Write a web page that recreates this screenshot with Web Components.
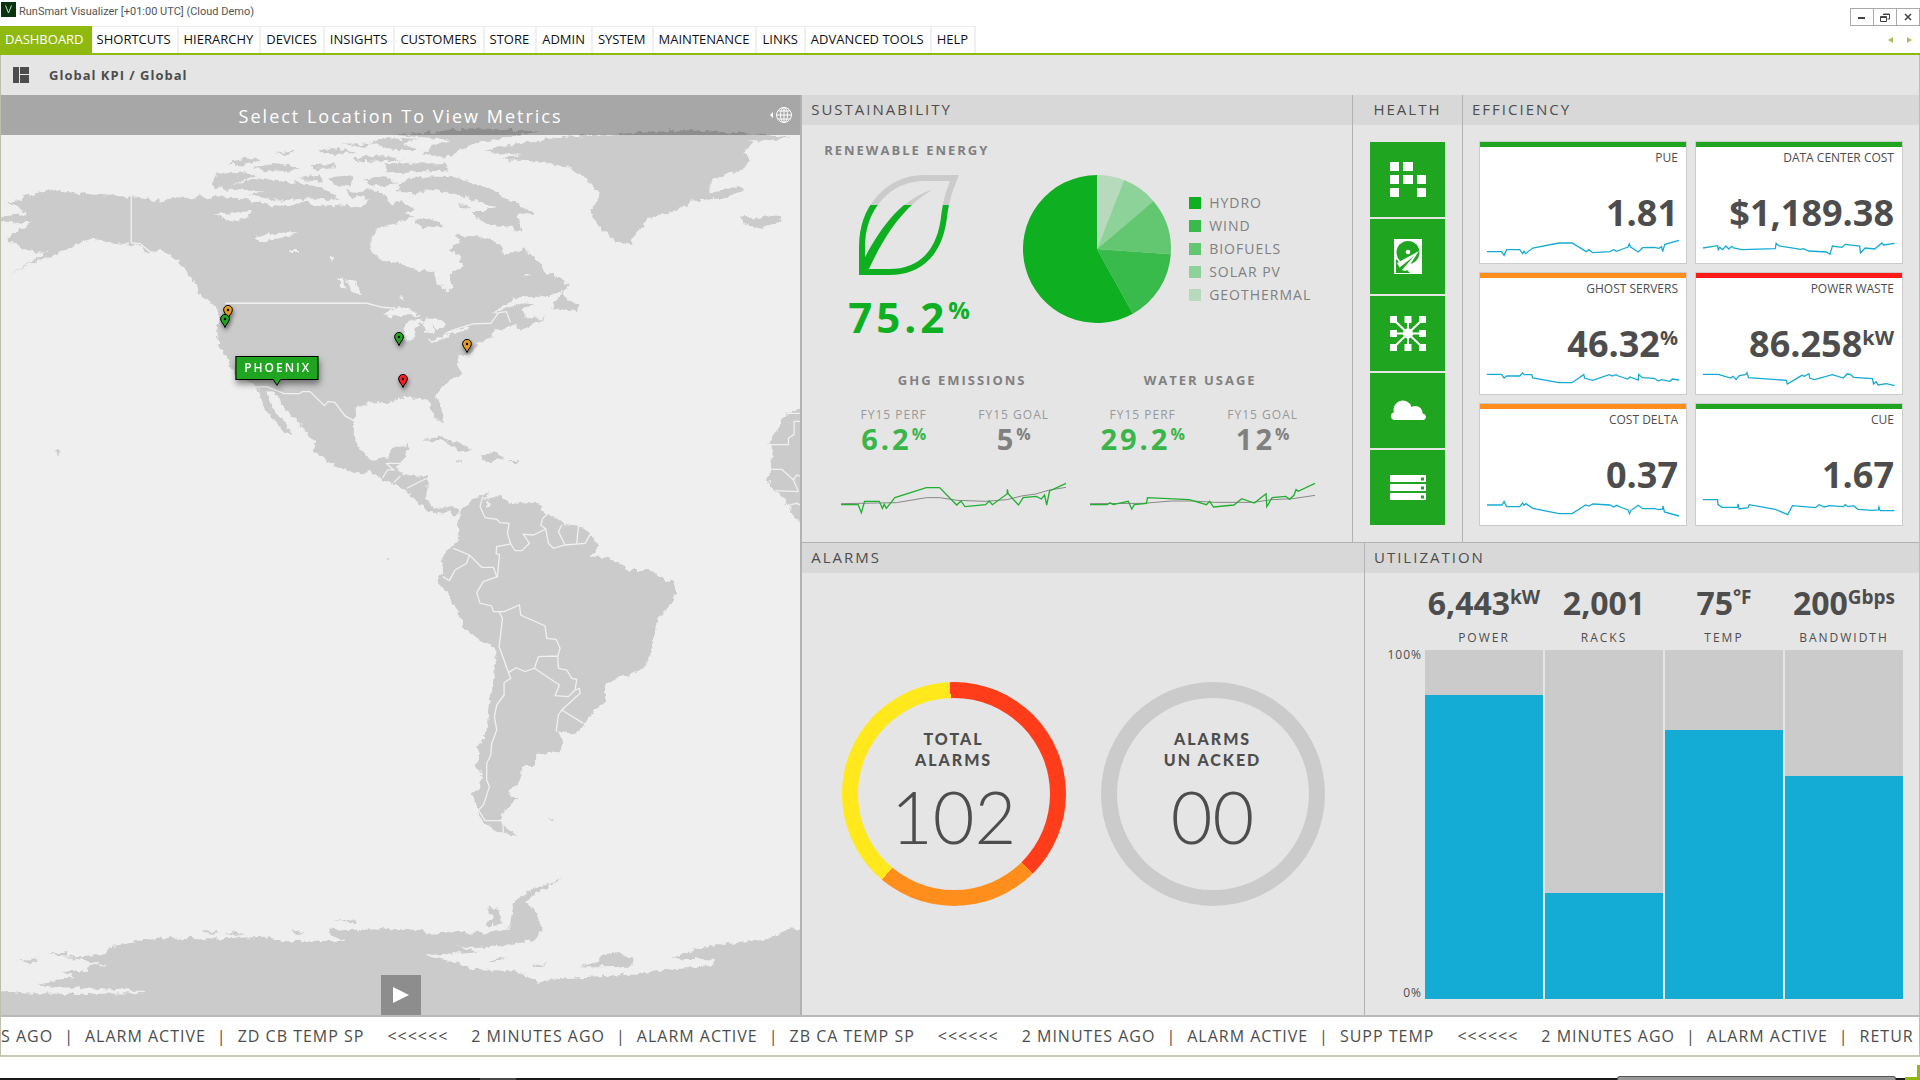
<!DOCTYPE html>
<html lang="en">
<head>
<meta charset="utf-8">
<title>RunSmart Visualizer</title>
<style>
html,body{margin:0;height:100%}
body{font-family:"Open Sans","Noto Sans",sans-serif;color:#4d4d4d;background:#fff;overflow:hidden}
</style>
</head>
<body>
<dash-app></dash-app>
<script>
const base = `<style>
:host{display:block;box-sizing:border-box}
*{box-sizing:border-box}
button{font:inherit;color:inherit;border:0;padding:0;margin:0;background:none;cursor:pointer}
a{color:inherit;text-decoration:none}
h1,h2,h3,p,ul,dl,dd,dt{margin:0;padding:0;font-weight:inherit}
ul{list-style:none}
svg{display:block}
</style>`;

// Registers an element whose shadow root is filled by render(host).
function define(name, render) {
  customElements.define(name, class extends HTMLElement {
    connectedCallback() {
      if (this.shadowRoot) return;
      const t = document.createElement('template');
      t.innerHTML = base + render(this);
      this.attachShadow({ mode: 'open' }).append(t.content.cloneNode(true));
    }
  });
}
const attr = (el, n, d = '') => el.getAttribute(n) ?? d;

define('title-bar', () => `<style>
:host{display:flex;height:26px;background:#fff}
.mark{width:15px;height:15px;margin:2px 3px 0 1px}
h1{font-size:11px;line-height:24px;color:#555;font-family:Roboto,sans-serif}
.controls{display:flex;margin:8px 0 0 auto;height:18px}
button{width:24px;height:18px;border:1px solid #aaa;margin-left:-1px;display:grid;place-items:center}
</style>
<svg class="mark" viewBox="0 0 15 15"><rect width="15" height="15" fill="#08330f"/><path d="M4.5 3.5 7.5 11l3-7.500" fill="none" stroke="#c9dccb" stroke-width="1"/></svg>
<h1>RunSmart Visualizer [+01:00 UTC] (Cloud Demo)</h1>
<div class="controls">
<button aria-label="Minimize"><svg width="8" height="8"><rect y="4" width="7" height="2" fill="#444"/></svg></button>
<button aria-label="Restore"><svg width="10" height="9" fill="none" stroke="#444"><path d="M3.500 2V1h6v5h-2M3 1.500h7" /><path d="M.5 3.500h6v5h-6zM0 4.500h7"/></svg></button>
<button aria-label="Close"><svg width="8" height="8"><path d="M1 1l6 6M7 1 1 7" stroke="#444" stroke-width="1.500"/></svg></button>
</div>`);

define('menu-bar', () => `<style>
:host{display:flex;height:29px;border-bottom:2px solid #8fb90e;background:#fff}
nav{display:flex;flex:none}
a{font-size:13px;line-height:24px;padding:0 6px 0 5px;border-top:1px solid #ececec;border-right:2px solid #f0f0f0;color:#111;white-space:nowrap}
a.on{background:#8fb90e;border-color:#8fb90e;color:#fff}
.step{display:flex;gap:14px;margin:11px 8px 0 auto}
.step svg{width:5px;height:6px}
</style>
<nav><a class="on" href="#">DASHBOARD</a>${['SHORTCUTS','HIERARCHY','DEVICES','INSIGHTS','CUSTOMERS','STORE','ADMIN','SYSTEM','MAINTENANCE','LINKS','ADVANCED TOOLS','HELP'].map(t => `<a href="#">${t}</a>`).join('')}</nav>
<div class="step"><svg viewBox="0 0 5 6"><path d="M5 0v6L0 3z" fill="#a9c261"/></svg><svg viewBox="0 0 5 6"><path d="M0 0v6l5-3z" fill="#a9c261"/></svg></div>`);

define('crumb-bar', () => `<style>
:host{display:flex;align-items:center;height:40px;background:#e5e5e5;padding-left:12px;gap:20px}
h2{font-size:13px;line-height:20px;font-weight:700;letter-spacing:1px}
</style>
<svg width="16" height="16" fill="#4d4d4d"><path d="M0 0h6v16H0zM7 0h9v7H7zM7 8h9v8H7z"/></svg>
<h2>Global KPI / Global</h2>`);

define('map-pin', el => `<style>
:host{position:absolute;transform:translate(-50%,-100%)}
button{display:block}
svg{overflow:visible;filter:drop-shadow(1px 3px 2px rgba(0,0,0,.45))}
</style>
<button aria-label="Site"><svg width="10" height="14"><path d="M5 13.500C4 10 .6 8 .6 4.800a4.400 4.400 0 0 1 8.800 0C9.400 8 6 10 5 13.500z" fill="${attr(el,'color')}" stroke="#000"/><circle cx="5" cy="5" r="1.200"/></svg></button>`);

define('map-flag', () => `<style>
:host{position:absolute;transform:translate(-50%,-100%);filter:drop-shadow(1px 4px 3px rgba(0,0,0,.45))}
button{display:block;background:#1fa51f;border:1px solid #000;color:#fff;font-size:12px;line-height:22px;font-weight:600;letter-spacing:2px;padding:0 6px 0 8px}
svg{margin:-1px auto 0}
</style>
<button><slot></slot></button><svg width="9" height="7"><path d="M0 0h9L4.500 7z" fill="#000"/><path d="M1 0h7L4.500 5.500z" fill="#1fa51f"/></svg>`);

define('world-map', () => {
  const pin = (x, y, c) => `<map-pin color="${c}" style="left:${((x - 1) / 7.99).toFixed(1)}%;top:${((y - 95) / 9.2).toFixed(1)}%"></map-pin>`;
  return `<style>
:host{position:relative;overflow:hidden;background:#efefef}
.map{position:absolute;inset:0;width:100%;height:100%}
header{position:relative;display:flex;align-items:center;height:40px;background:rgba(0,0,0,.3);color:#fff;padding-right:8px}
h2{flex:1;text-align:center;font-size:18px;line-height:36px;letter-spacing:2px;padding:2px 0 0 30px}
.play{position:absolute;bottom:0;left:50%;transform:translateX(-50%);width:40px;height:40px;background:rgba(0,0,0,.3);display:grid;place-items:center}
</style>
<svg class="map" viewBox="1 95 799 920" preserveAspectRatio="xMidYMid slice">
<defs><filter id="coast" x="0" y="0" width="100%" height="100%" color-interpolation-filters="sRGB"><feTurbulence type="fractalNoise" baseFrequency=".16" numOctaves="3" seed="4"/><feDisplacementMap in="SourceGraphic" scale="7" xChannelSelector="R" yChannelSelector="G"/></filter></defs>
<g fill="#cbcbcb" filter="url(#coast)">
<rect x="0" y="90" width="810" height="930" fill="#efefef"/>
<g transform="translate(0 90) scale(.5166 .3333)">
<path d="M10 337L40 330L45 318L95 300L140 308L200 316L245 320L310 332L345 322L375 325L385 312L400 325L430 318L470 325L520 345L560 348L590 335L610 348L650 345L700 352L715 330L690 318L705 295L730 300L745 320L760 345L780 330L800 365L780 370L800 380L770 400L735 410L720 440L715 480L740 512L770 520L810 540L840 548L845 580L868 605L875 590L870 555L895 530L890 500L870 480L890 455L880 435L925 440L965 460L975 490L1005 490L1013 465L1020 485L1040 515L1055 545L1085 565L1100 580L1098 600L1060 618L1000 625L975 645L950 672L990 650L1015 638L1040 640L1010 655L1015 685L1050 685L1060 680L1040 698L1005 720L1000 705L975 712L950 730L955 745L920 758L925 768L905 790L890 800L885 825L897 850L870 870L848 905L845 920L855 965L857 1000L845 990L833 945L822 928L790 925L770 925L750 942L720 935L690 955L685 995L685 1040L700 1085L720 1110L750 1105L762 1070L792 1065L785 1100L770 1130L775 1150L790 1155L826 1163L825 1225L839 1255L871 1250L887 1262L883 1280L871 1260L855 1275L829 1260L807 1235L787 1200L762 1183L739 1168L716 1145L697 1152L665 1138L633 1115L607 1080L610 1060L581 1005L555 960L540 925L530 905L515 905L525 950L545 985L567 1040L545 1020L515 960L500 905L490 880L450 850L440 810L425 770L420 720L425 680L418 655L400 628L385 610L380 585L365 555L350 520L310 480L290 490L265 465L225 460L180 445L150 460L100 500L60 520L20 555L60 515L90 490L50 480L15 450L15 440L60 400L0 395L0 380L50 372L35 350Z"/>
<path d="M935 185L985 165L1040 150L1100 140L1200 136L1300 137L1400 133L1440 150L1460 160L1440 185L1450 215L1440 235L1400 255L1375 275L1375 310L1430 290L1440 300L1400 325L1340 332L1330 350L1290 370L1260 378L1230 430L1222 465L1190 455L1165 420L1150 390L1140 360L1155 340L1160 310L1130 260L1095 228L1050 215L980 212L975 205L1010 195Z"/>
<path d="M760 135L840 125L920 114L1045 125L985 140L920 160L900 175L860 205L815 190L835 170L870 150L820 142ZM1150 136L1250 128L1330 120L1440 130L1530 142L1470 155ZM715 155L750 145L810 150L780 160L810 180L760 180ZM615 178L650 176L690 190L640 192ZM440 222L480 203L505 210L470 227ZM490 232L540 220L580 235L560 245L510 240ZM680 205L740 195L780 210L700 217ZM740 220L860 220L870 242L750 247ZM600 225L650 222L650 235L610 237ZM530 190L570 182L560 195ZM660 160L720 162L700 172Z"/>
<path d="M410 285L420 250L450 245L495 255L430 297ZM425 297L500 262L540 275L600 280L640 310L660 330L600 325L540 332L480 315L510 305ZM635 265L685 258L680 290L650 285ZM580 260L620 255L625 275L590 272ZM705 265L740 260L770 280L720 290ZM670 300L695 310L680 330ZM765 300L790 265L830 260L880 262L930 285L970 315L1040 375L1000 370L1010 430L985 410L960 410L920 385L915 365L960 355L940 340L890 318L840 300L800 310ZM800 390L830 385L860 405L820 415ZM885 345L910 348L900 358ZM1432 376L1460 386L1500 374L1517 390L1470 414L1440 405ZM1068 655L1090 603L1100 635L1118 640L1115 660ZM400 612L435 650L425 652L405 632Z"/>
<path d="M818 1052L850 1040L885 1058L915 1083L890 1082L860 1055ZM930 1093L960 1090L977 1105L938 1117ZM988 1110h16v6h-16zM880 1111h14v6h-14zM107 1082l10 5l-5 9z"/>
<g fill="#efefef"><path d="M740 672L770 652L800 660L815 678L785 675L760 682ZM800 688L822 690L803 715L798 752L783 752L780 735L785 700ZM825 685L855 690L862 705L848 720L837 705L840 727L823 725L818 700ZM828 752L870 733L868 742L838 757ZM863 725L907 710L902 722L870 732ZM415 375L485 363L480 382L445 394L430 383ZM493 445L520 430L577 426L535 450L510 457ZM670 568L690 573L699 617L680 602ZM655 565l10 5l2 27l-9 -12zM562 480h18v6h-18zM640 500l8 2l-5 16zM772 620h10l-2 14zM1010 555h18l-8 10z"/></g>
</g>
<g transform="translate(300 400) scale(.3333)">
<path d="M475 340L500 315L515 297L545 290L568 275L550 300L600 288L620 303L660 310L700 305L725 320L715 330L745 340L790 372L840 378L870 400L895 440L870 470L915 470L975 495L980 510L1050 510L1100 543L1122 548L1128 580L1110 615L1070 660L1062 710L1050 765L1030 805L1005 818L960 830L915 857L915 900L880 935L850 980L825 1000L790 998L770 990L792 1030L775 1055L705 1065L705 1095L662 1095L665 1125L655 1155L625 1170L630 1190L652 1195L620 1230L600 1255L605 1270L650 1307L600 1300L560 1275L535 1245L530 1215L515 1180L540 1165L545 1110L530 1105L535 1045L563 985L570 900L583 820L588 745L540 718L495 685L470 630L440 575L418 555L415 535L430 520L425 480L440 450L460 440L478 405Z"/>
<path d="M1540 10L1500 25L1460 40L1445 65L1405 130L1413 150L1416 205L1402 238L1420 270L1445 290L1470 320L1475 345L1500 362L1540 380ZM742 1256l22 -2l-4 7zM262 474l8 4l-8 3z"/>
<path d="M556 300l15 8l3 14l-12 4z" fill="#efefef"/>
</g>
<g transform="translate(0 840) scale(.5166 .3333)">
<path d="M-9 447L45 460L170 462L280 459L275 453L100 440L72 432L145 410L120 395L165 390L180 375L210 378L160 360L120 350L205 345L215 318L270 305L310 292L420 295L520 290L560 303L665 303L640 285L635 265L670 270L800 266L840 280L890 275L940 280L985 265L992 210L995 185L1030 150L1090 114L1040 157L1015 185L1035 210L1050 270L1035 300L960 320L900 320L880 312L925 338L870 340L822 346L890 370L910 385L1000 395L1040 425L1110 412L1230 403L1270 393L1375 378L1385 358L1300 355L1340 330L1400 312L1480 303L1530 265L1600 265L1600 560L-9 560Z"/>
<path d="M940 203L962 202L970 240L965 253L935 256L955 235ZM1120 382L1155 365L1165 345L1200 342L1225 360L1220 380ZM92 340L130 333L130 347ZM33 360L75 362L60 371ZM437 276l38 2l-20 8zM560 266l28 12l-15 6zM390 268l35 9l-15 5zM945 362l38 -12l-25 15zM1025 380l33 -12l-10 13zM642 240l50 4l-4 6z"/>
<path d="M978 215L985 250L940 268" fill="none" stroke="#efefef" stroke-width="6"/>
</g>
</g>
<g fill="none" stroke="#f0f0f0" stroke-width="1.300">
<g transform="translate(0 90) scale(.5166 .3333)">
<path vector-effect="non-scaling-stroke" d="M254 322V458L272 462L290 485L320 490L360 545M436 640H710L740 652L765 655M860 735L880 718L915 702L950 700L965 668L980 665L988 698M494 891L516 890L550 911H580L585 905L600 905L628 947L635 935L648 937L668 978L688 995M747 1120H775V1140M740 1165L750 1140L762 1140L747 1120M762 1178L775 1158M787 1195L826 1165"/>
</g>
<g transform="translate(300 400) scale(.3333)">
<path vector-effect="non-scaling-stroke" d="M548 290L540 320L555 353L590 358L600 368L627 370L622 400L632 432L645 452L665 452L688 430L670 403L700 405L737 387L722 375L728 355L745 340M632 432L590 440L588 460L598 465L592 530L550 545L530 578L540 610L575 618L580 635L612 635L658 615L662 645L735 678L740 715L768 718L780 745L773 768L775 805L800 810L815 835L830 838L825 870L838 865L840 880L785 930L775 945L768 995M785 930L850 970M737 387L745 430L760 445L795 435L855 430L870 403M785 375L775 395L795 435M835 378L830 430M460 445L508 465L545 502L580 502L590 530M508 465L500 490L465 510L448 542L428 530M597 635L607 655L602 700L597 740L610 775L625 818L648 803L675 815L703 805L715 770L773 768M703 805L778 855L765 887L805 890L825 870M625 818L632 835L612 848L612 885L590 915L583 950L590 990L575 1030L572 1065L560 1090L560 1140L568 1160L550 1215L535 1230L555 1262H608L610 1300M1407 134H1465V115L1482 103V64H1510M1418 208L1445 208L1480 240L1495 275M1480 240L1490 225L1510 232M1470 315L1490 310L1510 320M1460 40H1510M1425 272L1495 275"/>
</g></g>
</svg>
<header><h2>Select Location To View Metrics</h2>
<button aria-label="World view"><svg width="22" height="16" fill="none" stroke="#fff" stroke-width="1"><path d="M3 5v6L0 8z" fill="#fff" stroke="none"/><ellipse cx="14" cy="8" rx="7.500" ry="7.500"/><ellipse cx="14" cy="8" rx="3.500" ry="7.500"/><path d="M14 .5v15M6.500 8h15M8 4h12M8 12h12"/></svg></button></header>
${pin(228,319,'#e59b1d')}${pin(225,328,'#1fa51f')}${pin(399,346,'#1fa51f')}${pin(467,353,'#e59b1d')}${pin(403,388,'#f91d1d')}
<map-flag style="left:34.500%;top:31.600%">PHOENIX</map-flag>
<button class="play" aria-label="Play"><svg width="16" height="16"><path d="M0 0v16l16-8z" fill="#fff"/></svg></button>`;
});

define('dash-panel', el => `<style>
:host{display:flex;flex-direction:column;min-width:0;min-height:0}
h2{flex:none;height:30px;background:#d8d8d8;padding:0 9px;font-size:15px;line-height:29px;letter-spacing:2px;font-weight:500;white-space:nowrap}
:host([centered]) h2{text-align:center}
.body{flex:1;min-height:0;display:flex;flex-direction:column}
</style><h2>${attr(el,'heading')}</h2><div class="body"><slot></slot></div>`);

// Polylines drawn from "x,y x,y" lists inside the given view box.
define('spark-line', el => `<style>
svg{width:100%;height:100%;overflow:visible}
polyline{fill:none;vector-effect:non-scaling-stroke}
</style><svg viewBox="${attr(el,'box')}" preserveAspectRatio="none">
${el.hasAttribute('trend') ? `<polyline stroke="#888" points="${attr(el,'trend')}"/>` : ''}
<polyline stroke="${attr(el,'color','#14abd4')}" stroke-width="1.300" points="${attr(el,'points')}"/></svg>`);

define('leaf-gauge', () => `<style>:host{text-align:center;color:#0eb022}
svg{margin:0 auto 14px}
p{font-size:42px;line-height:56px;font-weight:700;letter-spacing:4px;white-space:nowrap}
sup{font-size:24px;font-weight:700;vertical-align:14px;line-height:0;letter-spacing:0}
</style>
<svg width="100" height="100" viewBox="0 0 100 100"><defs><linearGradient id="g" gradientUnits="userSpaceOnUse" x1="0" y1="0" x2="0" y2="100"><stop offset=".3" stop-color="#cbcbcb"/><stop offset=".3" stop-color="#0eb022"/></linearGradient></defs>
<path d="M3 97V72C3 33 29 3 66 3H95.500C90 16 87 26 85.500 38C82 76 63 97 30 97Z" fill="none" stroke="url(#g)" stroke-width="6"/>
<path d="M5 84C22 52 42 24 73 15C46 31 27 57 9 96H4z" fill="url(#g)"/></svg>
<p>75.2<sup>%</sup></p>`);

define('pie-chart', () => {
  const cuts = [0, 21.500, 49.500, 94, 151, 360];
  const tone = ['#b7dabc', '#8dd298', '#63c771', '#38bb4b', '#0eb022'];
  const pt = a => { const r = a * Math.PI / 180; return `${(74 + 74 * Math.sin(r)).toFixed(1)} ${(74 - 74 * Math.cos(r)).toFixed(1)}`; };
  return `<style>
:host{display:flex;gap:18px}
ul{padding-top:16px}
li{display:flex;align-items:center;gap:8px;font-size:14px;line-height:23px;letter-spacing:1px;color:#808080;white-space:nowrap}
i{width:12px;height:12px}
</style><svg width="148" height="148">${tone.map((c, i) => `<path fill="${c}" d="M74 74L${pt(cuts[i])}A74 74 0 ${cuts[i + 1] - cuts[i] > 180 ? 1 : 0} 1 ${pt(cuts[i + 1])}Z"/>`).join('')}</svg>
<ul>${['HYDRO','WIND','BIOFUELS','SOLAR PV','GEOTHERMAL'].map((t, i) => `<li><i style="background:${tone[4 - i]}"></i>${t}</li>`).join('')}</ul>`;
});

define('goal-pair', el => `<style>
:host{display:grid;grid-template-columns:120px 120px;justify-content:center;text-align:center}
p{font-size:12px;line-height:20px;letter-spacing:1px;color:#999;white-space:nowrap}
b{display:block;font-size:29px;line-height:28px;letter-spacing:3px;color:#39b54a;white-space:nowrap}
b.goal{color:#808080}
sup{font-size:16px;font-weight:700;vertical-align:10px;line-height:0;letter-spacing:0}
</style>
<div><p>FY15 PERF</p><b>${attr(el,'perf')}<sup>%</sup></b></div>
<div><p>FY15 GOAL</p><b class="goal">${attr(el,'goal')}<sup>%</sup></b></div>`);

define('sustain-view', () => `<style>
:host{padding:15px 22px 0}
h3{font-size:13px;line-height:20px;font-weight:700;letter-spacing:2px;color:#808080;white-space:nowrap}
.top{display:flex;margin:15px 0 25px 23px;gap:52px}
leaf-gauge{width:124px}
.titles{display:grid;grid-template-columns:238px 238px;text-align:center;padding-left:19px;margin-bottom:15px}
.pairs{display:grid;grid-template-columns:225px 225px;gap:29px 24px;padding-left:17px}
spark-line{height:32px}
goal-pair{margin:0 -20px}
</style>
<h3>RENEWABLE ENERGY</h3>
<div class="top"><leaf-gauge></leaf-gauge><pie-chart></pie-chart></div>
<div class="titles"><h3>GHG EMISSIONS</h3><h3>WATER USAGE</h3></div>
<div class="pairs">
<goal-pair perf="6.2" goal="5"></goal-pair><goal-pair perf="29.2" goal="12"></goal-pair>
<spark-line color="#1fb02f" box="115 1086 630 96" points="115,1154 163,1154 172,1178 181,1144 222,1144 231,1165 236,1153 242,1165 266,1133 354,1103 391,1103 439,1155 451,1143 462,1160 520,1154 530,1143 539,1154 580,1122 581,1108 583,1121 612,1155 625,1133 662,1129 676,1137 685,1125 691,1155 699,1113 745,1090" trend="115,1151 270,1148 354,1133 391,1133 440,1141 520,1144 580,1139 620,1128 660,1122 699,1110 745,1102"></spark-line>
<spark-line color="#1fb02f" box="812 1086 630 96" points="812,1154 860,1154 868,1148 877,1154 919,1144 929,1167 936,1154 970,1150 973,1133 1090,1139 1138,1154 1147,1144 1158,1161 1215,1155 1237,1136 1272,1149 1305,1121 1307,1160 1322,1133 1360,1129 1371,1138 1383,1126 1389,1109 1395,1114 1442,1090" trend="812,1151 960,1150 1040,1143 1100,1143 1160,1147 1270,1147 1320,1139 1380,1136 1442,1126"></spark-line>
</div>`);

define('health-list', () => {
  const icons = {
    Servers: '<path d="M0 0h9v9H0zM13 0h10v9H13zM0 13h9v9H0zM13 13h10v9H13zM27 13h9v9h-9zM0 26h9v9H0zM27 26h9v9h-9z"/>',
    Storage: '<path d="M4 0h28v35H4z"/><circle cx="18" cy="13.500" r="11.500" fill="#1fa51f"/><path d="M6 20v14h14l-4-4z" fill="#1fa51f"/><path d="M29 12 7 24l4 7 5 1z"/><path d="M24 17 9 29a2 2 0 0 0 3 2z" fill="#1fa51f"/><circle cx="18" cy="13" r="2.300"/>',
    Network: '<path d="M0 0h7v7H0zM14.500 0h7v7h-7zM29 0h7v7h-7zM0 14h7v7H0zM29 14h7v7h-7zM0 28h7v7H0zM14.500 28h7v7h-7zM29 28h7v7h-7z"/><circle cx="18" cy="17.500" r="5"/><path d="M4 4l28 27M32 4 4 31M18 3v29M3 17.500h30" stroke="#fff" stroke-width="2"/>',
    Cloud: '<path d="M4 27a4 4 0 0 1-1-7.500h1A9 9 0 0 1 21.500 14C27 11 33 15 32.500 20.500 37 21 37 27 33 27z"/>',
    Racks: '<path d="M0 5h36v7H0zM0 14h36v7H0zM0 23h36v7H0z"/><path d="M31 7.500h3v3h-3zM31 16.500h3v3h-3zM31 25.500h3v3h-3z" fill="#1fa51f"/>'
  };
  return `<style>
:host{flex:1;display:grid;grid-auto-rows:75px;gap:2px;padding:0 17px;align-content:center}
button{background:#1fa51f;display:grid;place-items:center;padding-left:1px}
</style>${Object.entries(icons).map(([n, p]) => `<button aria-label="${n}"><svg width="36" height="35" fill="#fff">${p}</svg></button>`).join('')}`;
});

define('kpi-card', el => `<style>
:host{display:flex;flex-direction:column;background:#fff;border:1px solid #cbcbcb;height:123px;text-align:right;padding-bottom:7px}
.bar{height:5px;background:${attr(el,'tone')}}
p{font-size:12px;line-height:16px;padding:3px 8px 0;white-space:nowrap}
b{margin-top:auto;font-size:36px;line-height:40px;padding:0 8px;white-space:nowrap}
sup{font-size:20px;font-weight:700;vertical-align:12px;line-height:0}
spark-line{height:18px;margin:5px 7px 0}
</style><div class="bar"></div><p>${attr(el,'label')}</p><b>${attr(el,'value')}${el.hasAttribute('unit') ? `<sup>${attr(el,'unit')}</sup>` : ''}</b>
<spark-line box="${attr(el,'box')}" points="${attr(el,'points')}"></spark-line>`);

define('efficiency-view', () => `<style>
:host{display:grid;grid-template-columns:1fr 1fr;gap:8px;padding:16px}
</style>
<kpi-card tone="#1fa51f" label="PUE" value="1.81" box="377 440 528 54" points="377,481 417,481 424,492 431,475 467,475 475,487 479,480 483,487 503,470 575,455 611,455 650,481 657,475 668,484 715,481 725,475 733,480 750,473 765,467 768,458 772,467 793,482 805,469 837,468 850,471 857,466 860,481 866,459 905,447"></kpi-card>
<kpi-card tone="#1fa51f" label="DATA CENTER COST" value="$1,189.38" box="971 440 528 54" points="971,470 1011,463 1013,475 1017,468 1025,475 1034,464 1042,473 1050,465 1055,470 1078,475 1170,472 1172,456 1180,464 1240,474 1247,472 1262,479 1310,482 1320,489 1327,464 1353,468 1362,459 1402,464 1404,485 1417,470 1443,473 1463,455 1468,461 1498,456"></kpi-card>
<kpi-card tone="#ff8e1c" label="GHOST SERVERS" value="46.32" unit="%" box="377 833 528 54" points="377,849 417,849 424,860 431,854 467,854 475,845 480,850 500,850 503,860 575,874 611,874 643,850 646,861 668,867 713,850 722,854 732,850 738,854 764,863 770,857 793,866 794,849 804,859 837,861 848,869 857,865 880,870 887,863 905,866"></kpi-card>
<kpi-card tone="#ff1a1a" label="POWER WASTE" value="86.258" unit="kW" box="971 833 528 54" points="971,849 1013,849 1047,860 1053,855 1062,864 1071,853 1088,850 1092,844 1096,859 1200,867 1203,878 1243,852 1250,855 1262,847 1265,861 1277,865 1327,850 1357,860 1367,848 1376,849 1385,858 1437,862 1440,878 1447,871 1453,881 1475,877 1498,883"></kpi-card>
<kpi-card tone="#ff8e1c" label="COST DELTA" value="0.37" box="377 1226 528 54" points="377,1241 418,1241 424,1231 431,1246 467,1246 475,1235 479,1242 484,1237 503,1251 575,1267 611,1267 648,1241 657,1244 668,1238 715,1241 725,1247 733,1242 750,1250 765,1256 769,1267 773,1257 793,1242 805,1252 837,1252 850,1255 860,1253 861,1244 865,1262 905,1274"></kpi-card>
<kpi-card tone="#1fa51f" label="CUE" value="1.67" box="971 1226 528 54" points="971,1225 1011,1225 1012,1239 1023,1248 1065,1248 1068,1238 1070,1253 1095,1249 1098,1240 1170,1254 1204,1270 1217,1243 1280,1249 1290,1240 1305,1247 1318,1243 1357,1246 1362,1240 1370,1246 1385,1243 1397,1254 1437,1257 1453,1256 1455,1247 1458,1258 1498,1258"></kpi-card>`);

define('alarm-ring', el => `<style>
:host{width:224px;height:224px;border-radius:50%;padding:16px;background:${attr(el,'ring')};font-family:Lato,sans-serif;text-align:center}
div{height:100%;border-radius:50%;background:#e5e5e5;padding-top:30px}
p{font-size:16px;line-height:21px;font-weight:900;letter-spacing:2px}
b{display:block;font-size:72px;line-height:92px;font-weight:300}
</style><div><p><slot></slot></p><b>${attr(el,'count')}</b></div>`);

define('alarm-view', () => `<style>
:host{flex:1;display:flex;align-items:center;justify-content:center;gap:35px}
</style>
<alarm-ring count="102" ring="conic-gradient(from -2deg,#ff3d1a 0 137deg,#ff8e1c 137deg 222deg,#ffe81c 222deg)">TOTAL<br>ALARMS</alarm-ring>
<alarm-ring count="00" ring="#cbcbcb">ALARMS<br>UN ACKED</alarm-ring>`);

define('util-column', el => `<style>
:host{display:flex;flex-direction:column;text-align:center;min-width:0}
b{font-size:32px;line-height:36px;white-space:nowrap}
sup{font-size:19px;font-weight:700;vertical-align:11px;line-height:0}
p{font-size:12px;line-height:20px;letter-spacing:2px;margin:7px 0 2px;white-space:nowrap}
.track{flex:1;background:#cbcbcb;display:flex;align-items:flex-end}
.fill{width:100%;height:${attr(el,'level')}%;background:#14abd4}
</style><b>${attr(el,'value')}${el.hasAttribute('unit') ? `<sup>${attr(el,'unit')}</sup>` : ''}</b><p>${attr(el,'label')}</p><div class="track"><div class="fill"></div></div>`);

define('util-view', () => `<style>
:host{flex:1;display:grid;grid-template-columns:58px repeat(4,1fr);gap:2px;padding:12px 16px 16px 0}
.axis{display:flex;flex-direction:column;justify-content:space-between;text-align:right;padding:64px 1px 0 0;font-size:12px;line-height:12px;letter-spacing:1px}
</style><div class="axis"><span>100%</span><span>0%</span></div>
<util-column value="6,443" unit="kW" label="POWER" level="87"></util-column>
<util-column value="2,001" label="RACKS" level="30.400"></util-column>
<util-column value="75" unit="°F" label="TEMP" level="77"></util-column>
<util-column value="200" unit="Gbps" label="BANDWIDTH" level="64"></util-column>`);

define('alarm-ticker', () => {
  const runs = [['S AGO','ALARM ACTIVE','ZD CB TEMP SP'],['2 MINUTES AGO','ALARM ACTIVE','ZB CA TEMP SP'],['2 MINUTES AGO','ALARM ACTIVE','SUPP TEMP'],['2 MINUTES AGO','ALARM ACTIVE','RETUR']];
  return `<style>
:host{display:flex;gap:23px;height:42px;border-top:2px solid #b9b9b9;border-bottom:2px solid #c9cab6;background:#fff;overflow:hidden;white-space:nowrap;font-size:16px;line-height:38px;letter-spacing:1px}
span{display:flex;gap:11px}
i{font-style:normal}
</style>${runs.map(r => `<span>${r.map(t => `<i>${t}</i>`).join('<i>|</i>')}</span>`).join('<span>&lt;&lt;&lt;&lt;&lt;&lt;</span>')}`;
});

define('task-edge', () => `<style>
:host{height:23px;display:flex;flex-direction:column;justify-content:flex-end;position:relative}
.bar{height:2px;background:#1c191a;padding-left:480px}
.bar i{display:block;width:36px;height:2px;background:#4a4748}
.pop{position:absolute;right:24px;bottom:0;width:279px;height:4px;border:1px solid #555;border-bottom:0;border-radius:3px 3px 0 0;background:#999}
.g{position:absolute;right:0;bottom:0}
</style><div class="bar"><i></i></div><div class="pop"></div><svg class="g" width="15" height="15"><path d="M12 0h3v15H0v-3h12z" fill="#8fb90e"/></svg>`);

define('dash-app', () => `<style>
:host{display:flex;flex-direction:column;height:100vh}
.frame{flex:1;display:flex;flex-direction:column;min-height:0;border:solid #bfc0ab;border-width:0 1px}
main{flex:1;min-height:0;display:grid;grid-template-columns:minmax(0,5fr) minmax(0,7fr);background:#e5e5e5}
.right{display:flex;flex-direction:column;border-left:2px solid #b2b2b2;min-width:0}
.upper{display:grid;grid-template-columns:minmax(0,1fr) 110px 457px;height:448px;border-bottom:1px solid #b2b2b2}
.lower{flex:1;min-height:0;display:grid;grid-template-columns:minmax(0,1fr) 555px}
.line{border-left:1px solid #b2b2b2}
</style>
<title-bar></title-bar><menu-bar></menu-bar>
<div class="frame"><crumb-bar></crumb-bar>
<main><world-map></world-map>
<div class="right"><div class="upper">
<dash-panel heading="SUSTAINABILITY"><sustain-view></sustain-view></dash-panel>
<dash-panel class="line" heading="HEALTH" centered><health-list></health-list></dash-panel>
<dash-panel class="line" heading="EFFICIENCY"><efficiency-view></efficiency-view></dash-panel>
</div><div class="lower">
<dash-panel heading="ALARMS"><alarm-view></alarm-view></dash-panel>
<dash-panel class="line" heading="UTILIZATION"><util-view></util-view></dash-panel>
</div></div></main>
<alarm-ticker></alarm-ticker></div>
<task-edge></task-edge>`);
</script>
</body>
</html>
